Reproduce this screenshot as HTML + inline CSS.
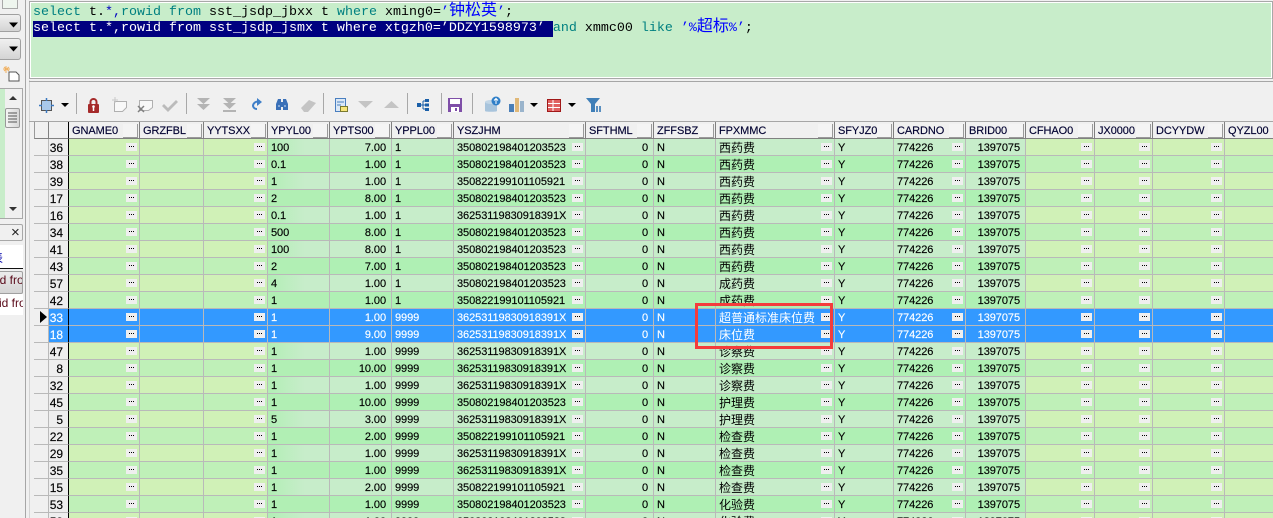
<!DOCTYPE html>
<html><head><meta charset="utf-8"><style>
html,body{margin:0;padding:0;background:#f0f0f0;width:1273px;height:518px;overflow:hidden}
body{position:relative;font-family:"Liberation Sans","WenQuanYi Zen Hei",sans-serif}
.a{position:absolute;box-sizing:border-box}
#sql{left:29px;top:1px;width:1244px;height:78px;background:#c8edca;border:1px solid #a8a8a8;box-shadow:inset 0 0 0 1px #fff;font:13.33px/16px "Liberation Mono","WenQuanYi Zen Hei",monospace;color:#000;white-space:pre}
#sql div{position:absolute;left:3px;height:16px}
.k{color:#008080}.s{color:#0000ff}.n{color:#0000c0}
.c{font-size:16px;line-height:14px}
.sel{background:#000080;color:#fff;display:inline-block;height:16px}
#tw{left:34px;top:122px;width:1239px;height:396px;overflow:hidden}
table{border-collapse:separate;border-spacing:0;table-layout:fixed;width:1251px;font-size:11px;letter-spacing:-.07px;-webkit-text-stroke:.15px}
tr{height:17px}
th,td{box-sizing:border-box;height:17px;padding:2px 0 0 3px;border-right:1px solid #b9b9b9;border-bottom:1px solid #b9b9b9;font-weight:normal;text-align:left;overflow:hidden;white-space:nowrap;position:relative;line-height:14px;vertical-align:top}
thead th{background:#f0f0f0;color:#000030;border-right:1px solid #808080;border-bottom:1px solid #808080;font-size:11px}
thead th u{position:absolute;right:1px;top:2px;width:14px;height:13px;border-right:1px solid #999;border-bottom:1px solid #999;background:#f4f4f4}
tbody th{background:#f0f0f0;padding:0}
tbody th+th{text-align:right;padding:2px 5px 0 0;border-right:1px solid #000;font-size:12px;background:#eeeeee}
td.r{text-align:right;padding:2px 5px 0 0}
tr.l td{background:#d0f1b7}
tr.g td{background:#bff0b8}
tr.l td.f{background:#c7edca}
tr.g td.f{background:#aff0b4}
tr.l td.m{background:linear-gradient(90deg,#b2eeb5,#c7edca 60%)}
tr.g td.m{background:#b1efb4}
tr.x td,tr.x th+th{background:#3399ff!important;color:#fff}
td.b i{position:absolute;right:2px;top:4px;width:11px;height:8px;background:#efefef}
td.b i:before{content:"";position:absolute;left:3px;top:3px;width:1px;height:1px;background:#000;box-shadow:2px 0 #000,4px 0 #000}
td em{display:block;height:14px;line-height:14px;overflow:hidden;font-style:normal;font-size:12px;letter-spacing:0;-webkit-text-stroke:0}
#rr{left:695px;top:303px;width:138px;height:46px;border:3px solid #f43c3c}
</style></head><body>

<!-- left panel -->
<div class="a" style="left:2px;top:-3px;width:16px;height:12px;border:1px solid #a8a8a8;background:#eef5ee"></div>
<div class="a" style="left:-6px;top:14px;width:27px;height:18px;border:1px solid #a0a0a0;border-radius:3px;background:linear-gradient(#f0f0f0,#d4d4d4)"></div>
<div class="a" style="left:-6px;top:38px;width:27px;height:22px;border:1px solid #a0a0a0;border-radius:3px;background:linear-gradient(#f0f0f0,#d4d4d4)"></div>
<div class="a" style="left:-2px;top:88px;width:25px;height:131px;border:1px solid #a8a8a8;background:#c8edca"></div>
<div class="a" style="left:5px;top:89px;width:17px;height:129px;background:#f0f0f0"></div>
<div class="a" style="left:5px;top:108px;width:15px;height:20px;border:1px solid #999;border-radius:2px;background:linear-gradient(90deg,#f4f4f4,#d8d8d8)"></div>
<div class="a" style="left:-4px;top:224px;width:27px;height:17px;border:1px solid #a8a8a8;border-radius:2px;background:#f0f0f0;font-size:15px;line-height:15px;padding-left:14px;color:#222">×</div>
<div class="a" style="left:0;top:245px;width:23px;height:24px;background:#fff;border-bottom:1px solid #111;overflow:hidden"><span class="a" style="left:-9px;top:4px;font-size:12px;color:#00a;white-space:nowrap">表</span></div>
<div class="a" style="left:-2px;top:271px;width:25px;height:23px;border:1px solid #a0a0a0;border-radius:2px;background:linear-gradient(#ececec,#d4d4d4);overflow:hidden"><span class="a" style="left:-2px;top:1px;font-size:12px;color:#5a0a1a;white-space:nowrap">id from</span></div>
<div class="a" style="left:0;top:294px;width:23px;height:21px;background:#fff;overflow:hidden"><span class="a" style="left:-1px;top:2px;font-size:12px;color:#5a0a1a;white-space:nowrap">id from</span></div>
<div class="a" style="left:25px;top:0;width:1px;height:518px;background:#a6a6a6"></div>
<div class="a" style="left:29px;top:80px;width:1px;height:438px;background:#d4d4d4"></div>

<!-- sql -->
<div class="a" id="sql">
<div style="top:2px"><span class="k">select</span> t.<span class="n">*,</span><span class="k">rowid from</span> sst_jsdp_jbxx t <span class="k">where</span> xming0=<span class="s">’<span class="c">钟松英</span>’</span>;</div>
<div style="top:18px"><span class="sel">select t.*,rowid from sst_jsdp_jsmx t where xtgzh0=’DDZY1598973’ </span><span class="k">and</span> xmmc00 <span class="k">like</span> <span class="s">’%<span class="c">超标</span>%’</span>;</div>
</div>
<div class="a" style="left:29px;top:81px;width:1244px;height:1px;background:#a6a6a6"></div>
<div class="a" style="left:29px;top:121px;width:1244px;height:1px;background:#a6a6a6"></div>

<!-- table -->
<div class="a" id="tw"><table>
<colgroup><col style="width:15px"><col style="width:20px"><col style="width:71px"><col style="width:64px"><col style="width:64px"><col style="width:62px"><col style="width:62px"><col style="width:62px"><col style="width:132px"><col style="width:68px"><col style="width:62px"><col style="width:119px"><col style="width:59px"><col style="width:72px"><col style="width:60px"><col style="width:69px"><col style="width:58px"><col style="width:72px"><col style="width:60px"></colgroup>
<thead><tr><th style="border-left:1px solid #999"></th><th style="border-right-color:#000"></th><th>GNAME0<u></u></th><th>GRZFBL<u></u></th><th>YYTSXX<u></u></th><th>YPYL00<u></u></th><th>YPTS00<u></u></th><th>YPPL00<u></u></th><th>YSZJHM<u></u></th><th>SFTHML<u></u></th><th>ZFFSBZ<u></u></th><th>FPXMMC<u></u></th><th>SFYJZ0<u></u></th><th>CARDNO<u></u></th><th>BRID00<u></u></th><th>CFHAO0<u></u></th><th>JX0000<u></u></th><th>DCYYDW<u></u></th><th>QYZL00</th></tr></thead>
<tbody>
<tr class="l"><th></th><th>36</th><td class="b"><i></i></td><td></td><td class="b"><i></i></td><td class="m">100</td><td class="f r">7.00</td><td class="f">1</td><td class="f b">350802198401203523<i></i></td><td class="f r">0</td><td class="f">N</td><td class="f b"><em>西药费</em><i></i></td><td class="f">Y</td><td class="f b">774226<i></i></td><td class="f r">1397075</td><td class="b"><i></i></td><td class="b"><i></i></td><td class="b"><i></i></td><td></td></tr>
<tr class="g"><th></th><th>38</th><td class="b"><i></i></td><td></td><td class="b"><i></i></td><td class="m">0.1</td><td class="f r">1.00</td><td class="f">1</td><td class="f b">350802198401203523<i></i></td><td class="f r">0</td><td class="f">N</td><td class="f b"><em>西药费</em><i></i></td><td class="f">Y</td><td class="f b">774226<i></i></td><td class="f r">1397075</td><td class="b"><i></i></td><td class="b"><i></i></td><td class="b"><i></i></td><td></td></tr>
<tr class="l"><th></th><th>39</th><td class="b"><i></i></td><td></td><td class="b"><i></i></td><td class="m">1</td><td class="f r">1.00</td><td class="f">1</td><td class="f b">350822199101105921<i></i></td><td class="f r">0</td><td class="f">N</td><td class="f b"><em>西药费</em><i></i></td><td class="f">Y</td><td class="f b">774226<i></i></td><td class="f r">1397075</td><td class="b"><i></i></td><td class="b"><i></i></td><td class="b"><i></i></td><td></td></tr>
<tr class="g"><th></th><th>17</th><td class="b"><i></i></td><td></td><td class="b"><i></i></td><td class="m">2</td><td class="f r">8.00</td><td class="f">1</td><td class="f b">350802198401203523<i></i></td><td class="f r">0</td><td class="f">N</td><td class="f b"><em>西药费</em><i></i></td><td class="f">Y</td><td class="f b">774226<i></i></td><td class="f r">1397075</td><td class="b"><i></i></td><td class="b"><i></i></td><td class="b"><i></i></td><td></td></tr>
<tr class="l"><th></th><th>16</th><td class="b"><i></i></td><td></td><td class="b"><i></i></td><td class="m">0.1</td><td class="f r">1.00</td><td class="f">1</td><td class="f b">36253119830918391X<i></i></td><td class="f r">0</td><td class="f">N</td><td class="f b"><em>西药费</em><i></i></td><td class="f">Y</td><td class="f b">774226<i></i></td><td class="f r">1397075</td><td class="b"><i></i></td><td class="b"><i></i></td><td class="b"><i></i></td><td></td></tr>
<tr class="g"><th></th><th>34</th><td class="b"><i></i></td><td></td><td class="b"><i></i></td><td class="m">500</td><td class="f r">8.00</td><td class="f">1</td><td class="f b">350802198401203523<i></i></td><td class="f r">0</td><td class="f">N</td><td class="f b"><em>西药费</em><i></i></td><td class="f">Y</td><td class="f b">774226<i></i></td><td class="f r">1397075</td><td class="b"><i></i></td><td class="b"><i></i></td><td class="b"><i></i></td><td></td></tr>
<tr class="l"><th></th><th>41</th><td class="b"><i></i></td><td></td><td class="b"><i></i></td><td class="m">100</td><td class="f r">8.00</td><td class="f">1</td><td class="f b">350802198401203523<i></i></td><td class="f r">0</td><td class="f">N</td><td class="f b"><em>西药费</em><i></i></td><td class="f">Y</td><td class="f b">774226<i></i></td><td class="f r">1397075</td><td class="b"><i></i></td><td class="b"><i></i></td><td class="b"><i></i></td><td></td></tr>
<tr class="g"><th></th><th>43</th><td class="b"><i></i></td><td></td><td class="b"><i></i></td><td class="m">2</td><td class="f r">7.00</td><td class="f">1</td><td class="f b">350802198401203523<i></i></td><td class="f r">0</td><td class="f">N</td><td class="f b"><em>西药费</em><i></i></td><td class="f">Y</td><td class="f b">774226<i></i></td><td class="f r">1397075</td><td class="b"><i></i></td><td class="b"><i></i></td><td class="b"><i></i></td><td></td></tr>
<tr class="l"><th></th><th>57</th><td class="b"><i></i></td><td></td><td class="b"><i></i></td><td class="m">4</td><td class="f r">1.00</td><td class="f">1</td><td class="f b">350802198401203523<i></i></td><td class="f r">0</td><td class="f">N</td><td class="f b"><em>成药费</em><i></i></td><td class="f">Y</td><td class="f b">774226<i></i></td><td class="f r">1397075</td><td class="b"><i></i></td><td class="b"><i></i></td><td class="b"><i></i></td><td></td></tr>
<tr class="g"><th></th><th>42</th><td class="b"><i></i></td><td></td><td class="b"><i></i></td><td class="m">1</td><td class="f r">1.00</td><td class="f">1</td><td class="f b">350822199101105921<i></i></td><td class="f r">0</td><td class="f">N</td><td class="f b"><em>成药费</em><i></i></td><td class="f">Y</td><td class="f b">774226<i></i></td><td class="f r">1397075</td><td class="b"><i></i></td><td class="b"><i></i></td><td class="b"><i></i></td><td></td></tr>
<tr class="x"><th></th><th>33</th><td class="b"><i></i></td><td></td><td class="b"><i></i></td><td>1</td><td class="r">1.00</td><td>9999</td><td class="b">36253119830918391X<i></i></td><td class="r">0</td><td>N</td><td class="b"><em>超普通标准床位费</em><i></i></td><td>Y</td><td class="b">774226<i></i></td><td class="r">1397075</td><td class="b"><i></i></td><td class="b"><i></i></td><td class="b"><i></i></td><td></td></tr>
<tr class="x"><th></th><th>18</th><td class="b"><i></i></td><td></td><td class="b"><i></i></td><td>1</td><td class="r">9.00</td><td>9999</td><td class="b">36253119830918391X<i></i></td><td class="r">0</td><td>N</td><td class="b"><em>床位费</em><i></i></td><td>Y</td><td class="b">774226<i></i></td><td class="r">1397075</td><td class="b"><i></i></td><td class="b"><i></i></td><td class="b"><i></i></td><td></td></tr>
<tr class="l"><th></th><th>47</th><td class="b"><i></i></td><td></td><td class="b"><i></i></td><td class="m">1</td><td class="f r">1.00</td><td class="f">9999</td><td class="f b">36253119830918391X<i></i></td><td class="f r">0</td><td class="f">N</td><td class="f b"><em>诊察费</em><i></i></td><td class="f">Y</td><td class="f b">774226<i></i></td><td class="f r">1397075</td><td class="b"><i></i></td><td class="b"><i></i></td><td class="b"><i></i></td><td></td></tr>
<tr class="g"><th></th><th>8</th><td class="b"><i></i></td><td></td><td class="b"><i></i></td><td class="m">1</td><td class="f r">10.00</td><td class="f">9999</td><td class="f b">36253119830918391X<i></i></td><td class="f r">0</td><td class="f">N</td><td class="f b"><em>诊察费</em><i></i></td><td class="f">Y</td><td class="f b">774226<i></i></td><td class="f r">1397075</td><td class="b"><i></i></td><td class="b"><i></i></td><td class="b"><i></i></td><td></td></tr>
<tr class="l"><th></th><th>32</th><td class="b"><i></i></td><td></td><td class="b"><i></i></td><td class="m">1</td><td class="f r">1.00</td><td class="f">9999</td><td class="f b">36253119830918391X<i></i></td><td class="f r">0</td><td class="f">N</td><td class="f b"><em>诊察费</em><i></i></td><td class="f">Y</td><td class="f b">774226<i></i></td><td class="f r">1397075</td><td class="b"><i></i></td><td class="b"><i></i></td><td class="b"><i></i></td><td></td></tr>
<tr class="g"><th></th><th>45</th><td class="b"><i></i></td><td></td><td class="b"><i></i></td><td class="m">1</td><td class="f r">10.00</td><td class="f">9999</td><td class="f b">350802198401203523<i></i></td><td class="f r">0</td><td class="f">N</td><td class="f b"><em>护理费</em><i></i></td><td class="f">Y</td><td class="f b">774226<i></i></td><td class="f r">1397075</td><td class="b"><i></i></td><td class="b"><i></i></td><td class="b"><i></i></td><td></td></tr>
<tr class="l"><th></th><th>5</th><td class="b"><i></i></td><td></td><td class="b"><i></i></td><td class="m">5</td><td class="f r">3.00</td><td class="f">9999</td><td class="f b">36253119830918391X<i></i></td><td class="f r">0</td><td class="f">N</td><td class="f b"><em>护理费</em><i></i></td><td class="f">Y</td><td class="f b">774226<i></i></td><td class="f r">1397075</td><td class="b"><i></i></td><td class="b"><i></i></td><td class="b"><i></i></td><td></td></tr>
<tr class="g"><th></th><th>22</th><td class="b"><i></i></td><td></td><td class="b"><i></i></td><td class="m">1</td><td class="f r">2.00</td><td class="f">9999</td><td class="f b">350822199101105921<i></i></td><td class="f r">0</td><td class="f">N</td><td class="f b"><em>检查费</em><i></i></td><td class="f">Y</td><td class="f b">774226<i></i></td><td class="f r">1397075</td><td class="b"><i></i></td><td class="b"><i></i></td><td class="b"><i></i></td><td></td></tr>
<tr class="l"><th></th><th>29</th><td class="b"><i></i></td><td></td><td class="b"><i></i></td><td class="m">1</td><td class="f r">1.00</td><td class="f">9999</td><td class="f b">36253119830918391X<i></i></td><td class="f r">0</td><td class="f">N</td><td class="f b"><em>检查费</em><i></i></td><td class="f">Y</td><td class="f b">774226<i></i></td><td class="f r">1397075</td><td class="b"><i></i></td><td class="b"><i></i></td><td class="b"><i></i></td><td></td></tr>
<tr class="g"><th></th><th>35</th><td class="b"><i></i></td><td></td><td class="b"><i></i></td><td class="m">1</td><td class="f r">1.00</td><td class="f">9999</td><td class="f b">36253119830918391X<i></i></td><td class="f r">0</td><td class="f">N</td><td class="f b"><em>检查费</em><i></i></td><td class="f">Y</td><td class="f b">774226<i></i></td><td class="f r">1397075</td><td class="b"><i></i></td><td class="b"><i></i></td><td class="b"><i></i></td><td></td></tr>
<tr class="l"><th></th><th>15</th><td class="b"><i></i></td><td></td><td class="b"><i></i></td><td class="m">1</td><td class="f r">2.00</td><td class="f">9999</td><td class="f b">350822199101105921<i></i></td><td class="f r">0</td><td class="f">N</td><td class="f b"><em>检查费</em><i></i></td><td class="f">Y</td><td class="f b">774226<i></i></td><td class="f r">1397075</td><td class="b"><i></i></td><td class="b"><i></i></td><td class="b"><i></i></td><td></td></tr>
<tr class="g"><th></th><th>53</th><td class="b"><i></i></td><td></td><td class="b"><i></i></td><td class="m">1</td><td class="f r">1.00</td><td class="f">9999</td><td class="f b">350802198401203523<i></i></td><td class="f r">0</td><td class="f">N</td><td class="f b"><em>化验费</em><i></i></td><td class="f">Y</td><td class="f b">774226<i></i></td><td class="f r">1397075</td><td class="b"><i></i></td><td class="b"><i></i></td><td class="b"><i></i></td><td></td></tr>
<tr class="l"><th></th><th>50</th><td class="b"><i></i></td><td></td><td class="b"><i></i></td><td class="m">1</td><td class="f r">1.00</td><td class="f">9999</td><td class="f b">350802198401203523<i></i></td><td class="f r">0</td><td class="f">N</td><td class="f b"><em>化验费</em><i></i></td><td class="f">Y</td><td class="f b">774226<i></i></td><td class="f r">1397075</td><td class="b"><i></i></td><td class="b"><i></i></td><td class="b"><i></i></td><td></td></tr>
</tbody></table></div>

<div class="a" id="rr"></div>

<!-- icons -->
<svg class="a" style="left:0;top:0" width="1273" height="518" viewBox="0 0 1273 518">
<path d="M9 22.500h9l-4.500 5zM9 46.500h9l-4.500 5z" fill="#000"/>
<path d="M9 72h7l3 3v6H9z" fill="#fff" stroke="#555"/>
<path d="M6 66v7M3 69h7M4 67l5 4M9 67l-5 4" stroke="#f0b060" fill="none"/>
<path d="M13 96l-4 4h8zM9 207h8l-4 4z" fill="#333"/>
<path d="M8 113h9M8 116h9M8 119h9M8 122h9" stroke="#555"/>
<path d="M40 311v12l7-6z" fill="#000"/>

<!-- separators -->
<path d="M76.500 93v21M186.500 93v21M323.500 93v21M407.500 93v21M441.500 93v21M472.500 93v21" stroke="#a8a8a8"/>

<!-- 1 grid select -->
<rect x="41.500" y="100.500" width="10" height="10" fill="#a9c8ea" stroke="#555"/>
<path d="M46.500 98v3M46.500 110v3M39 105.500h3M51 105.500h3" stroke="#3a78c0" stroke-width="1.500"/>
<path d="M61 103h8l-4 4z" fill="#000"/>
<!-- 2 lock -->
<path d="M90.500 104v-2a3 3 0 0 1 6 0v2" fill="none" stroke="#a52a2a" stroke-width="2"/>
<rect x="88" y="104" width="11" height="9" rx="1" fill="#a52a2a"/>
<path d="M93.500 106v5" stroke="#fff" stroke-width="1.500"/><circle cx="93.500" cy="106.500" r="1.300" fill="#fff"/>
<!-- 3 new -->
<path d="M114.500 101.500h12v6l-4 4h-8z" fill="#f8f8f8" stroke="#b0b0b0"/>
<path d="M115 97v6M112 100h6" stroke="#c8c8c8"/>
<!-- 4 delete -->
<path d="M139.500 100.500h13v7l-4 3h-9z" fill="#f8f8f8" stroke="#b0b0b0"/>
<path d="M138 106l6 6M144 106l-6 6" stroke="#808080" stroke-width="1.500"/>
<!-- 5 check -->
<path d="M164 104l4 4 8-8 2 2-10 10-6-6z" fill="#bbb"/>
<!-- 6 double down -->
<path d="M197 98h13l-6.500 6zM197 104h13l-6.500 6z" fill="#b4b4b4"/>
<!-- 7 down to bar -->
<path d="M223 98h13l-6.500 6zM223 103h13l-6.500 6z" fill="#b4b4b4"/><path d="M223 111h13" stroke="#b4b4b4" stroke-width="2"/>
<!-- 8 refresh -->
<path d="M258 101.500a5 4.500 0 0 0-5 4.500 4 4 0 0 0 4 3" fill="none" stroke="#3f7fc8" stroke-width="2"/>
<path d="M257 98l5 4-5 4z" fill="#3f7fc8"/>
<!-- 9 binoculars -->
<path d="M276 110v-6l2-5h3v3h2v-3h3l2 5v6h-5v-3h-2v3z" fill="#3a70b8"/>
<path d="M278 106h2M284 106h2" stroke="#cfe0f4"/>
<!-- 10 eraser -->
<path d="M301 108l8-8 7 3-8 9h-4z" fill="#c4c4c4"/>
<!-- 11 -->
<rect x="335.500" y="98.500" width="10" height="13" fill="#dbe8f6" stroke="#4a7fc0"/>
<path d="M337 102h7M337 105h4" stroke="#4a7fc0"/>
<rect x="340.500" y="106.500" width="7" height="5" fill="#f8e67a" stroke="#7a7a30"/>
<!-- 12,13 -->
<path d="M358 101h15l-7.500 7z" fill="#c4c4c4"/>
<path d="M384 108h15l-7.500-7z" fill="#c4c4c4"/>
<!-- 14 tree -->
<path d="M421 105h2M423 101v8M423 101h2M423 105h2M423 109h2" stroke="#1a5fa8" fill="none"/>
<rect x="417" y="103" width="4" height="4" fill="#1a5fa8"/>
<rect x="425" y="99" width="4" height="3" fill="#1a5fa8"/><rect x="425" y="103.500" width="4" height="3" fill="#1a5fa8"/><rect x="425" y="108" width="4" height="3" fill="#1a5fa8"/>
<!-- 15 save -->
<rect x="448" y="98" width="14" height="14" fill="#7f4fa8"/>
<rect x="450" y="99" width="10" height="5" fill="#fff"/><rect x="451" y="107" width="8" height="5" fill="#fff"/><rect x="455" y="108" width="2" height="3" fill="#7f4fa8"/>
<!-- 16 db -->
<path d="M485 102h12v9c0 1-12 1-12 0z" fill="#a8c4dc"/><ellipse cx="491" cy="102" rx="6" ry="2" fill="#c2d6e6"/>
<circle cx="496" cy="101" r="4.500" fill="#2f7fc8"/><path d="M496 104v-5M494 100.500l2-2 2 2" stroke="#fff" fill="none"/>
<!-- 17 bars -->
<rect x="509" y="104" width="5" height="8" fill="#4a7fb8"/><rect x="515" y="98" width="4" height="14" fill="#e0b878"/><rect x="520" y="101" width="4" height="11" fill="#9ab4cc"/>
<path d="M530 103h8l-4 4z" fill="#000"/>
<!-- 18 table -->
<rect x="547.500" y="99.500" width="13" height="12" fill="#e06060" stroke="#a01818"/>
<path d="M548 103.500h12M548 107.500h12M553 100v11" stroke="#fff"/>
<path d="M568 103h8l-4 4z" fill="#000"/>
<!-- 19 funnel -->
<path d="M586 98h14l-5 6v8h-4v-8z" fill="#3f7fb8"/>
<path d="M597 106v6M600 106v6" stroke="#5a8fc0" stroke-width="2"/>
</svg>
</body></html>
